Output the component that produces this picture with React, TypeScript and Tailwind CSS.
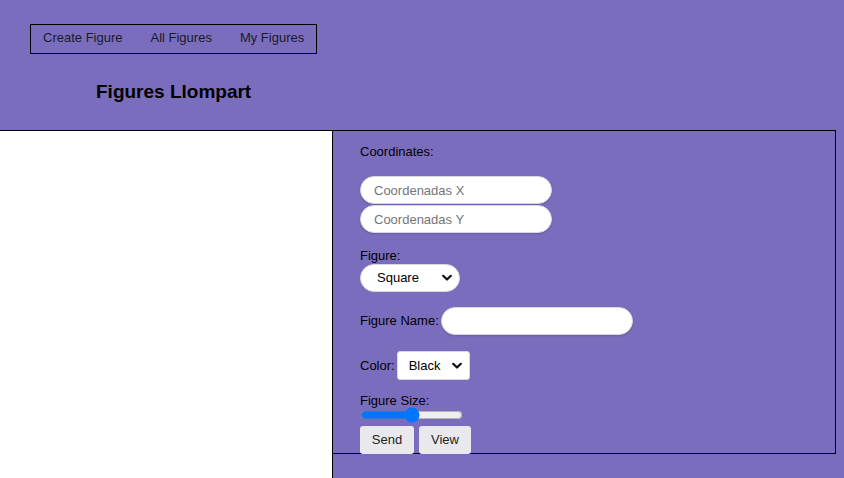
import { useState } from 'react'

const Chevron = () => (
    <svg width="10" height="7" viewBox="0 0 10 7" className="pointer-events-none absolute top-1/2 -translate-y-1/2 right-[8px]">
        <path d="M1.2 1.2 L5 5 L8.8 1.2" fill="none" stroke="#111" strokeWidth="2.2" strokeLinecap="round" strokeLinejoin="round" />
    </svg>
)

const App = () => {
    var [size, setSize] = useState(50)

    return <div className="min-h-[478px] bg-[#7a6dbd] text-[13px] text-black font-['Liberation_Sans',Arial,sans-serif]">
        <div className="pt-[24px] pl-[30px]">
            <div className="inline-flex flex-col items-center">
                <nav className="flex gap-[28px] border border-black h-[30px] items-center px-[12px] pb-[2px] text-[#1a1a2a]">
                    <a href="#">Create Figure</a>
                    <a href="#">All Figures</a>
                    <a href="#">My Figures</a>
                </nav>
                <h2 className="mt-[27px] text-[19px] font-bold leading-[22px]">Figures Llompart</h2>
            </div>
        </div>

        <div className="flex items-start mt-[27px]">
            <div className="w-[333px] h-[400px] bg-white border-t border-r border-black shrink-0" />

            <form className="w-[503px] h-[324px] border-t border-r border-b border-black pl-[27px] pt-[13px]" onSubmit={e => e.preventDefault()}>
                <p className="leading-[15px]">Coordinates:</p>
                <input
                    type="text"
                    placeholder="Coordenadas X"
                    className="block mt-[17px] w-[192px] h-[28px] rounded-full bg-white pl-[13px] border border-[#d8d8e0] shadow-[0_1px_2px_rgba(0,0,0,0.15)] placeholder:text-[#757575] outline-none"
                />
                <input
                    type="text"
                    placeholder="Coordenadas Y"
                    className="block mt-[1px] w-[192px] h-[28px] rounded-full bg-white pl-[13px] border border-[#d8d8e0] shadow-[0_1px_2px_rgba(0,0,0,0.15)] placeholder:text-[#757575] outline-none"
                />

                <p className="mt-[15px] leading-[15px]">Figure:</p>
                <div className="relative w-[100px] mt-[1px]">
                    <select className="appearance-none block w-[100px] h-[28px] rounded-full bg-white pl-[16px] border border-[#d8d8e0] outline-none">
                        <option>Square</option>
                        <option>Circle</option>
                        <option>Triangle</option>
                    </select>
                    <Chevron />
                </div>

                <div className="flex items-center mt-[15px] gap-[2px]">
                    <label>Figure Name:</label>
                    <input
                        type="text"
                        className="w-[192px] h-[28px] rounded-full bg-white pl-[13px] border border-[#d8d8e0] shadow-[0_1px_2px_rgba(0,0,0,0.15)] outline-none"
                    />
                </div>

                <div className="flex items-center mt-[16px] gap-[2px]">
                    <label>Color:</label>
                    <div className="relative w-[73px]">
                        <select className="appearance-none block w-[73px] h-[29px] rounded-[3px] bg-white pl-[11px] border border-[#d8d8e0] outline-none">
                            <option>Black</option>
                            <option>Red</option>
                            <option>Blue</option>
                        </select>
                        <Chevron />
                    </div>
                </div>

                <p className="mt-[13px] leading-[15px]">Figure Size:</p>
                <input
                    type="range"
                    min={0}
                    max={100}
                    value={size}
                    onChange={e => setSize(Number(e.target.value))}
                    className="block w-[103px] h-[12px] m-0 mt-[1px] accent-[#0075ff]"
                />

                <div className="flex gap-[5px] mt-[5px]">
                    <button type="submit" className="w-[54px] h-[28px] bg-[#e9e9ed] rounded-[3px] text-[#222]">Send</button>
                    <button type="button" className="w-[52px] h-[28px] bg-[#e9e9ed] rounded-[3px] text-[#222]">View</button>
                </div>
            </form>
        </div>
    </div>
}

export default App
